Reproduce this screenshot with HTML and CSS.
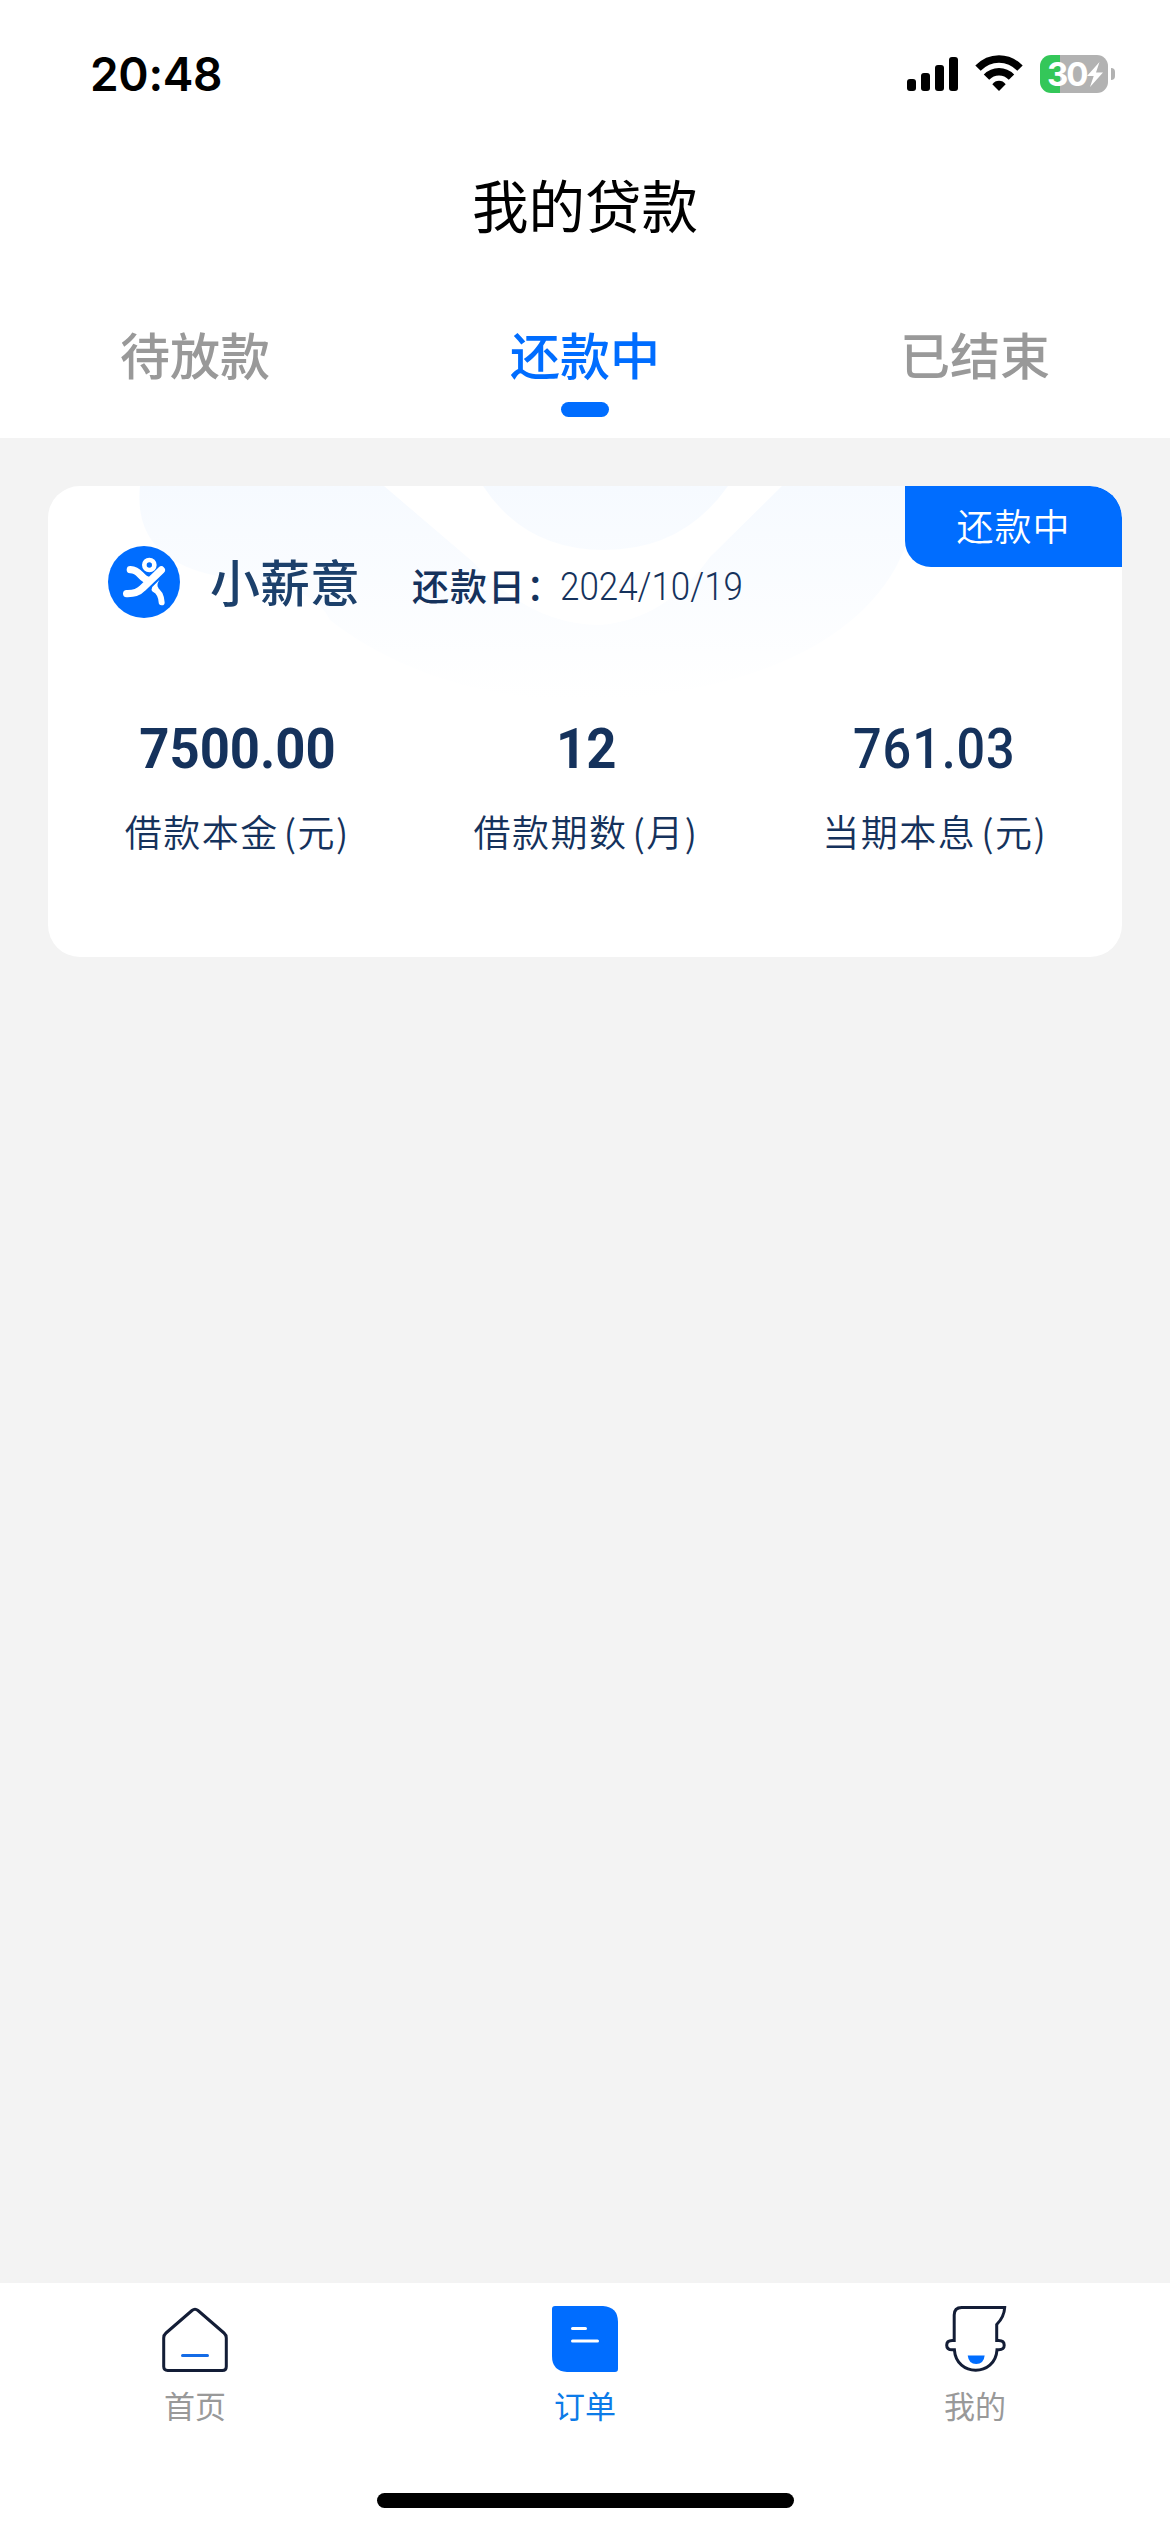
FILE: index.html
```html
<!DOCTYPE html>
<html lang="zh-CN">
<head>
<meta charset="utf-8">
<title>我的贷款</title>
<link rel="stylesheet" href="styles.css">
</head>
<body>
<div class="screen">
  <header class="header">
    <div class="status">
      <span class="time">20:48</span>
      <div class="status-icons">
        <svg class="signal" width="52" height="38" viewBox="0 0 52 38">
          <rect x="0" y="24" width="9" height="12" rx="3"/>
          <rect x="14" y="18" width="9" height="18" rx="3"/>
          <rect x="28" y="10" width="9" height="26" rx="3"/>
          <rect x="42" y="2" width="9" height="34" rx="3"/>
        </svg>
        <svg class="wifi" width="48" height="38" viewBox="0 0 48 38">
          <path class="wave" d="M3 13.2Q12 4 24 4t21 9.200"/>
          <path class="wave" d="M11.500 22.200Q16.700 16.800 24 16.800t12.500 5.400"/>
          <path d="M24 36l-6.700-6.800q2.700-3.400 6.700-3.400t6.700 3.400z"/>
        </svg>
        <div class="battery">
          <span class="level">30</span>
          <svg width="16" height="25" viewBox="0 0 16 25"><path d="M12.500 0L0 14h6.700L3 25 16 10.500H9z"/></svg>
        </div>
        <span class="nub"></span>
      </div>
    </div>
    <h1 class="title">我的贷款</h1>
    <nav class="tabs">
      <a class="tab">待放款</a>
      <a class="tab active">还款中</a>
      <a class="tab">已结束</a>
    </nav>
  </header>

  <main class="content">
    <section class="card">
      <svg class="watermark" width="1074" height="240" viewBox="48 486 1074 240">
        <defs>
          <linearGradient id="fade" gradientUnits="userSpaceOnUse" x1="0" y1="486" x2="0" y2="700">
            <stop offset="0" stop-color="#f6faff"/>
            <stop offset="1" stop-color="#fff"/>
          </linearGradient>
        </defs>
        <path fill="url(#fade)" d="M140 486C135 535 160 574 250 580Q315 588 330 620C400 675 500 705 610 700C740 690 850 650 896 567L935 486Z"/>
        <path fill="#fff" d="M384 486L473 562Q530 625 600 625Q665 620 710 557L782 486Z"/>
        <path fill="url(#fade)" d="M483 486Q525 550 604 550T728 486Z"/>
      </svg>
      <span class="badge">还款中</span>
      <div class="card-head">
        <svg class="logo" width="72" height="72" viewBox="234 228 216 216">
          <circle cx="342" cy="336" r="108" fill="#006dff"/>
          <g fill="none" stroke="#fff" stroke-linecap="round" stroke-width="22">
            <path d="M301 299Q318 300 331 314T354 331"/>
            <path d="M394 300L337 355Q321 372 290 371"/>
            <path stroke-width="18" d="M374 358Q393 368 395 397"/>
          </g>
          <path fill="#fff" d="M366 352L388 330Q378 346 386 355L376 366Z"/>
          <circle cx="358" cy="285" r="15" fill="none" stroke="#fff" stroke-width="14"/>
        </svg>
        <span class="brand">小薪意</span>
        <span class="due">还款日：</span>
        <span class="date">2024/10/19</span>
      </div>
      <div class="figures">
        <div class="figure"><span class="value">7500.00</span><span class="label">借款本金<i>(</i>元)</span></div>
        <div class="figure"><span class="value">12</span><span class="label">借款期数<i>(</i>月)</span></div>
        <div class="figure"><span class="value medium">761.03</span><span class="label">当期本息<i>(</i>元)</span></div>
      </div>
    </section>
  </main>

  <footer class="footer">
    <nav class="bottom-nav">
      <a class="nav-item">
        <svg width="66" height="66" viewBox="0 0 66 66" fill="none" stroke-width="3" stroke-linecap="round" stroke-linejoin="round">
          <path stroke="#131d36" d="M30 4.500Q33 2 36 4.500L62 27Q64.300 29 64.300 32V60.500Q64.300 64.500 60.300 64.500H5.700Q1.700 64.500 1.700 60.500V32Q1.700 29 4 27Z"/>
          <path stroke="#146be6" d="M20.500 49.500h25"/>
        </svg>
        <span>首页</span>
      </a>
      <a class="nav-item active">
        <svg width="66" height="66" viewBox="0 0 66 66">
          <path fill="#006dff" d="M3 0H51Q66 1 66 16V63Q66 66 63 66H15Q0 65 0 50V3Q0 0 3 0Z"/>
          <path d="M20.500 22.500h13M20.500 35h25" stroke="#fff" stroke-width="3" stroke-linecap="round"/>
        </svg>
        <span>订单</span>
      </a>
      <a class="nav-item">
        <svg width="66" height="66" viewBox="-2.200 0 66 66">
          <path fill="none" stroke="#131d36" stroke-width="3" d="M10 34V9Q10 1.500 17.500 1.500H60.500Q60 11 52.500 18.500V34.500H54.500Q60 34.500 60 39.200T54.500 43.800H52.800C51 71 12 71 10.200 43.800H8Q2.500 43.800 2.500 39.200T8 34.500H10Z"/>
          <path fill="#006dff" d="M23.500 49.500h17Q39.500 58 32 58t-8.500-8.500Z"/>
        </svg>
        <span>我的</span>
      </a>
    </nav>
    <div class="home-bar"></div>
  </footer>
</div>
</body>
</html>
```

FILE: styles.css
```css
* { box-sizing: border-box; }

body {
  margin: 0;
  background: #f3f3f3;
  font-family: "Noto Sans CJK SC", sans-serif;
  color: #15325c;
}

.screen {
  width: 1170px;
  height: 2532px;
  display: flex;
  flex-direction: column;
}

.header {
  height: 438px;
  background: #fff;
}

.status {
  height: 148px;
  padding: 0 55px 0 90px;
  display: flex;
  justify-content: space-between;
  align-items: center;
}

.time {
  font: 600 46px/56px Inter, sans-serif;
  letter-spacing: -.3px;
  color: #000;
}

.status-icons { display: flex; align-items: center; }
.signal { margin-right: 16px; }
.wifi { margin-right: 17px; }
.wave { fill: none; stroke: #000; stroke-width: 7.500; }

.battery {
  width: 68px;
  height: 38px;
  border-radius: 11px;
  display: flex;
  align-items: center;
  padding-left: 7px;
  background: linear-gradient(90deg, #34c759 20px, #b2b2b2 20px);
}
.battery svg { flex: none; fill: #fff; }
.level {
  width: 40px;
  font: 700 33px/38px Inter, sans-serif;
  letter-spacing: -2px;
  color: #fff;
}
.nub {
  width: 4px;
  height: 12px;
  margin-left: 3px;
  border-radius: 0 4px 4px 0;
  background: #b2b2b2;
}

.title {
  margin: 0;
  height: 112px;
  text-align: center;
  font-weight: 400;
  font-size: 56.500px;
  line-height: 111px;
  color: #000;
}

.tabs {
  height: 178px;
  display: grid;
  grid-template-columns: repeat(3, 390px);
}
.tab {
  display: flex;
  flex-direction: column;
  align-items: center;
  padding-top: 57px;
  font-weight: 500;
  font-size: 50px;
  line-height: 72px;
  color: #999;
}
.tab.active { color: #006dff; }
.tab.active::after {
  content: "";
  width: 48px;
  height: 15px;
  margin-top: 13px;
  border-radius: 8px;
  background: #006dff;
}

.content { flex: 1; padding: 48px; }

.card {
  position: relative;
  height: 471px;
  border-radius: 32px;
  background: #fff;
  overflow: hidden;
}
.watermark { position: absolute; left: 0; top: 0; }
.badge {
  position: absolute;
  right: 0;
  top: 0;
  width: 217px;
  height: 81px;
  border-radius: 0 32px 0 26px;
  background: #006dff;
  color: #fff;
  text-align: center;
  font-weight: 350;
  font-size: 37px;
  letter-spacing: 1px;
  line-height: 79px;
}

.card-head {
  position: relative;
  display: flex;
  align-items: center;
  height: 72px;
  margin: 60px 0 0 60px;
}
.brand {
  width: 202px;
  margin-left: 30px;
  padding-bottom: 5px;
  font-weight: 500;
  font-size: 50px;
  line-height: 72px;
  color: #1c406b;
}
.due {
  width: 148px;
  white-space: nowrap;
  font-weight: 500;
  font-size: 37px;
  letter-spacing: 1px;
  line-height: 60px;
  padding-top: 5px;
}
.date {
  font: 350 38px/60px Roboto, sans-serif;
  padding-top: 10px;
  transform: scaleX(.92);
  transform-origin: 0 50%;
}

.figures {
  position: relative;
  width: 1046px;
  margin: 91px 0 0 15px;
  display: grid;
  grid-template-columns: repeat(3, 1fr);
}
.figure {
  display: flex;
  flex-direction: column;
  align-items: center;
}
.value {
  font: 700 56px/80px Roboto, sans-serif;
  transform: scaleX(.94);
}
.value.medium { font-weight: 500; letter-spacing: 1px; transform: scaleX(.9); }
.label {
  font-weight: 350;
  font-size: 37px;
  letter-spacing: 1.500px;
  line-height: 56px;
  margin-top: 14px;
}
.label i { font-style: normal; margin-left: 5px; }

.footer {
  height: 249px;
  background: #fff;
}
.bottom-nav {
  height: 210px;
  display: grid;
  grid-template-columns: repeat(3, 390px);
}
.nav-item {
  display: flex;
  flex-direction: column;
  align-items: center;
  padding-top: 23px;
  font-size: 31px;
  line-height: 46px;
  color: #999;
}
.nav-item span { margin-top: 10px; }
.nav-item.active { color: #0c7be8; }

.home-bar {
  width: 417px;
  height: 15px;
  margin: 0 auto;
  border-radius: 8px;
  background: #000;
}
```
